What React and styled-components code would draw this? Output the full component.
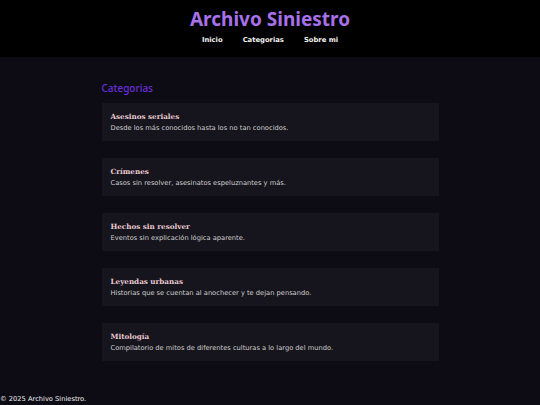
import React from 'react';
import styled, { createGlobalStyle } from 'styled-components';

const categories = [
  { title: 'Asesinos seriales', text: 'Desde los más conocidos hasta los no tan conocidos.' },
  { title: 'Crímenes', text: 'Casos sin resolver, asesinatos espeluznantes y más.' },
  { title: 'Hechos sin resolver', text: 'Eventos sin explicación lógica aparente.' },
  { title: 'Leyendas urbanas', text: 'Historias que se cuentan al anochecer y te dejan pensando.' },
  { title: 'Mitología', text: 'Compilatorio de mitos de diferentes culturas a lo largo del mundo.' },
];

const GlobalStyle = createGlobalStyle`
  html, body {
    margin: 0;
    padding: 0;
    background: #0d0c15;
  }
  body {
    font-family: 'DejaVu Sans', Verdana, sans-serif;
    color: #e6e6e6;
  }
`;

const App = () => {
  return (
    <Page>
      <GlobalStyle />
      <Header>
        <Title>Archivo Siniestro</Title>
        <Nav>
          <NavLink>Inicio</NavLink>
          <NavLink>Categorias</NavLink>
          <NavLink>Sobre mi</NavLink>
        </Nav>
      </Header>

      <Main>
        <Heading>Categorias</Heading>
        <CardList>
          {categories.map((item) => (
            <Card key={item.title}>
              <CardTitle>{item.title}</CardTitle>
              <CardText>{item.text}</CardText>
            </Card>
          ))}
        </CardList>
      </Main>

      <Footer>© 2025 Archivo Siniestro.</Footer>
    </Page>
  );
};

export default App;

const Page = styled.div`
  min-height: 405px;
  display: flex;
  flex-direction: column;
`;

const Header = styled.header`
  background: #000;
  height: 57px;
  box-sizing: border-box;
  padding-top: 8px;
  display: flex;
  flex-direction: column;
  align-items: center;
`;

const Title = styled.h1`
  margin: 0;
  font-family: 'Noto Sans', sans-serif;
  font-size: 19px;
  line-height: 22px;
  font-weight: 700;
  color: #a771ea;
`;

const Nav = styled.nav`
  display: flex;
  gap: 20px;
  margin-top: 6px;
`;

const NavLink = styled.a`
  font-size: 6.8px;
  line-height: 9px;
  font-weight: 700;
  color: #f2f2f2;
  cursor: pointer;
`;

const Main = styled.main`
  width: 337px;
  margin: 0 auto;
  padding-top: 24px;
`;

const Heading = styled.h2`
  margin: 0 0 8px;
  font-family: 'Noto Sans', sans-serif;
  font-size: 10px;
  line-height: 14px;
  font-weight: 500;
  color: #6a2ed8;
`;

const CardList = styled.div`
  display: flex;
  flex-direction: column;
  gap: 17px;
`;

const Card = styled.div`
  background: #16141c;
  height: 38px;
  box-sizing: border-box;
  padding: 9px 9px 0;
`;

const CardTitle = styled.h3`
  margin: 0;
  font-family: 'DejaVu Serif', Georgia, serif;
  font-size: 7.2px;
  line-height: 10px;
  font-weight: 700;
  color: #e8c9d0;
`;

const CardText = styled.p`
  margin: 2px 0 0;
  font-size: 6.7px;
  line-height: 9px;
  color: #cfcfcf;
`;

const Footer = styled.footer`
  margin-top: auto;
  padding-bottom: 1px;
  font-size: 6.7px;
  line-height: 9px;
  color: #f0f0f0;
`;
